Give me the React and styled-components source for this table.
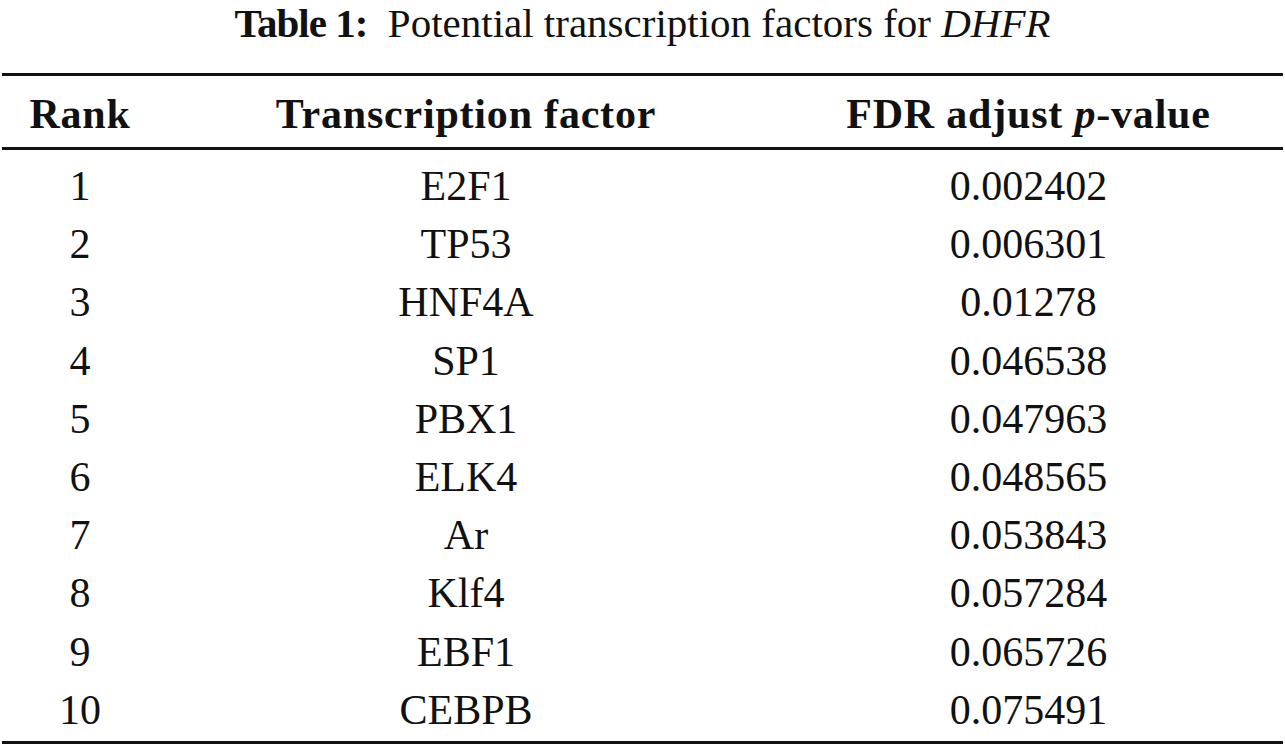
import React from 'react'
import styled, { createGlobalStyle } from 'styled-components'

const rows = [
  [1, 'E2F1', '0.002402'],
  [2, 'TP53', '0.006301'],
  [3, 'HNF4A', '0.01278'],
  [4, 'SP1', '0.046538'],
  [5, 'PBX1', '0.047963'],
  [6, 'ELK4', '0.048565'],
  [7, 'Ar', '0.053843'],
  [8, 'Klf4', '0.057284'],
  [9, 'EBF1', '0.065726'],
  [10, 'CEBPB', '0.075491'],
]

export default function App() {
  return (
    <>
      <GlobalStyle />
      <Page>
        <Caption>
          <Label>Table 1:</Label>&nbsp; Potential transcription factors for <i>DHFR</i>
        </Caption>
        <Table>
          <HeadRow>
            <Cell>Rank</Cell>
            <Cell>Transcription factor</Cell>
            <Cell>FDR adjust <i>p</i>-value</Cell>
          </HeadRow>
          <Body>
            {rows.map(([rank, name, p]) => (
              <Row key={rank}>
                <Cell>{rank}</Cell>
                <Cell>{name}</Cell>
                <Cell>{p}</Cell>
              </Row>
            ))}
          </Body>
        </Table>
      </Page>
    </>
  )
}

const GlobalStyle = createGlobalStyle`
  body {
    margin: 0;
    background: #fff;
    color: #111;
    font-family: "Liberation Serif", "Times New Roman", serif;
  }
`

const Page = styled.div`
  width: 1285px;
  padding: 0 2px;
  box-sizing: border-box;
`

const Caption = styled.div`
  font-size: 41px;
  line-height: 46px;
  text-align: center;
  margin-bottom: 27px;
`

const Label = styled.b`
  letter-spacing: -1px;
`

const Table = styled.div`
  border-top: 3px solid #111;
  border-bottom: 3px solid #111;
  font-size: 42px;
`

const Row = styled.div`
  display: grid;
  grid-template-columns: 156px 616px 509px;
  line-height: 58.2px;
`

const HeadRow = styled(Row)`
  font-weight: bold;
  letter-spacing: 0.8px;
  line-height: 46px;
  padding: 15px 0 10px;
  border-bottom: 3px solid #111;
`

const Body = styled.div`
  padding: 7px 0 2px;
`

const Cell = styled.div`
  text-align: center;
  white-space: nowrap;
`
